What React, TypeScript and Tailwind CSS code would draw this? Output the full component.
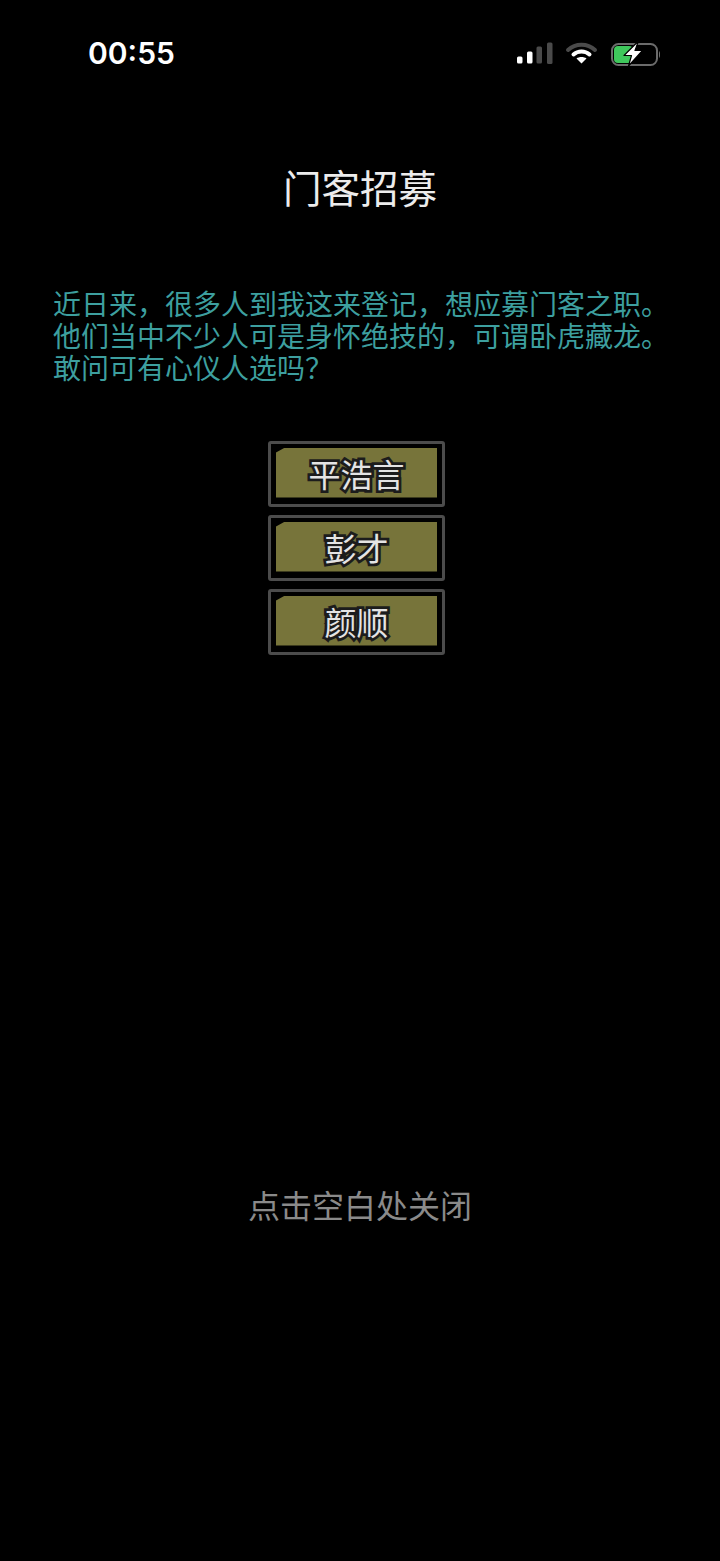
const cjk = "font-['Noto_Sans_CJK_SC','Noto_Sans',sans-serif]";

const names = ['平浩言', '彭才', '颜顺'];

const StatusIcons = () => (
    <svg width="146" height="30" viewBox="0 0 146 30" fill="none">
        {/* signal */}
        <rect x="3" y="18.5" width="5.5" height="7" rx="1.5" fill="#fff" />
        <rect x="13" y="13.5" width="5.5" height="12" rx="1.5" fill="#fff" />
        <rect x="22.5" y="8.5" width="5.5" height="17" rx="1.5" fill="#4a4a4a" />
        <rect x="33" y="4.5" width="5.5" height="21.5" rx="1.5" fill="#4a4a4a" />
        {/* wifi */}
        <path d="M54 12 C61.5 5 73.5 5 81 12" stroke="#4a4a4a" strokeWidth="4" strokeLinecap="round" />
        <path d="M59.5 16.5 C64 12.5 71 12.5 75.5 16.5" stroke="#fff" strokeWidth="4" strokeLinecap="round" />
        <path d="M67.5 25.5 L62.5 20.5 C65 18.5 70 18.5 72.5 20.5 Z" fill="#fff" />
        {/* battery */}
        <rect x="98" y="6" width="45" height="21" rx="6.5" stroke="#6b6b6b" strokeWidth="2" />
        <path d="M145 13 C146.5 14 146.5 19 145 20 Z" fill="#6b6b6b" />
        <rect x="100" y="8" width="19" height="17" rx="4" fill="#3fc75c" />
        <path d="M124.5 3 L110 17.5 H117.5 L114.5 28 L128.5 12.5 H121 Z" fill="#fff" stroke="#000" strokeWidth="1.2" strokeLinejoin="round" />
    </svg>
);

const NameButton = ({ name }: { name: string }) => (
    <button className="block w-[177px] h-[66px] border-[3px] border-[#4c4c4c] rounded-[3px] bg-black pt-[3px] px-[5px] pb-[6px]">
        <div className="h-[50px] bg-[#77743a] [clip-path:polygon(9px_0,100%_0,100%_100%,0_100%,0_5px)] flex items-center justify-center">
            <span
                className={`${cjk} text-[32px] leading-none text-[#e4e4e4] [-webkit-text-stroke:5.5px_#1c1c1c] [paint-order:stroke_fill]`}
            >
                {name}
            </span>
        </div>
    </button>
);

export default function App() {
    return (
        <div className={`${cjk} w-[720px] h-[1561px] bg-black flex flex-col overflow-hidden`}>
            <div className="flex items-center justify-between h-[30px] mt-[38px] pl-[88px] pr-[60px]">
                <span className="font-['Inter',sans-serif] text-[30px] font-semibold leading-none text-white">00:55</span>
                <StatusIcons />
            </div>

            <h1 className="mt-[95px] text-center text-[38.5px] leading-[46px] font-normal text-[#ececec]">门客招募</h1>

            <p className="mt-[78px] ml-[53px] text-[28px] leading-[32px] text-[#3d9f9f] whitespace-nowrap">
                近日来，很多人到我这来登记，想应募门客之职。
                <br />
                他们当中不少人可是身怀绝技的，可谓卧虎藏龙。
                <br />
                敢问可有心仪人选吗？
            </p>

            <div className="mt-[58px] ml-[268px] flex flex-col gap-[8px]">
                {names.map((name) => (
                    <NameButton key={name} name={name} />
                ))}
            </div>

            <p className="mt-[529px] text-center text-[32px] leading-[40px] text-[#8a8a8a]">点击空白处关闭</p>
        </div>
    );
}
